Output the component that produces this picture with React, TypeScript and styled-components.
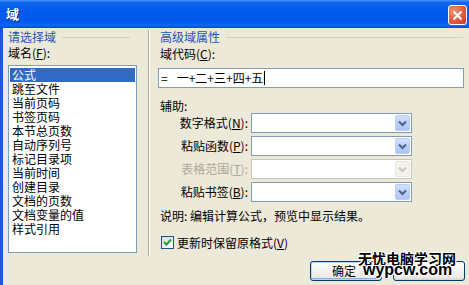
import React from "react";
import styled, { createGlobalStyle } from "styled-components";

const Global = createGlobalStyle`
  html, body { margin: 0; padding: 0; background: #ECE9D8; }
  body { font-family: "Noto Sans CJK SC", "Noto Sans", sans-serif; }
  * { box-sizing: border-box; }
`;

const Window = styled.div`
  position: relative;
  width: 469px;
  height: 285px;
  overflow: hidden;
  background: #ece9d8;
  display: flex;
  flex-direction: column;
  font-family: "Noto Sans CJK SC", "Noto Sans", sans-serif;
  font-size: 12px;
  color: #000;
`;

const TitleBar = styled.div`
  height: 28px;
  flex: none;
  display: flex;
  align-items: center;
  justify-content: space-between;
  padding: 0 2px 0 6px;
  background: linear-gradient(
    180deg,
    #4a97fa 0%,
    #0f68ec 9%,
    #0059ea 40%,
    #045cee 80%,
    #0f69f5 90%,
    #024bd4 100%
  );
`;

const TitleText = styled.span`
  color: #fff;
  font-weight: 700;
  font-size: 13px;
  line-height: 14px;
  text-shadow: 1px 1px #0c1a8a;
`;

const CloseButton = styled.div`
  width: 19px;
  height: 20px;
  margin-top: 2px;
  border: 1px solid #fff;
  border-radius: 3px;
  background: radial-gradient(circle at 30% 30%, #f39274 0%, #e35a3c 55%, #cc3f20 100%);
  display: flex;
  align-items: center;
  justify-content: center;
`;

const Frame = styled.div`
  flex: 1;
  display: flex;
  flex-direction: column;
  border-left: 3px solid #1458dc;
`;

const Main = styled.div`
  height: 228px;
  flex: none;
  display: flex;
`;

const LeftPanel = styled.div`
  width: 145px;
  flex: none;
  padding: 2px 0 0 5px;
  display: flex;
  flex-direction: column;
`;

const GroupHeader = styled.div<{ $w?: number; $ml?: number; $mr?: number }>`
  display: flex;
  align-items: center;
  height: 14px;
  line-height: 14px;
  color: #1f52b8;
  width: ${(p) => (p.$w ? `${p.$w}px` : "auto")};
  margin-left: ${(p) => p.$ml ?? 0}px;
  margin-right: ${(p) => p.$mr ?? 0}px;
  white-space: nowrap;
`;

const HeaderLine = styled.div`
  flex: 1;
  height: 0;
  border-top: 1px solid #d0d0bf;
  margin-left: 6px;
`;

const Label = styled.div<{ $mt?: number; $ml?: number; $disabled?: boolean }>`
  height: 14px;
  line-height: 14px;
  margin-top: ${(p) => p.$mt ?? 0}px;
  margin-left: ${(p) => p.$ml ?? 0}px;
  color: ${(p) => (p.$disabled ? "#aca899" : "#000")};
  white-space: nowrap;
`;

const ListBox = styled.div`
  margin-top: 5px;
  width: 129px;
  height: 188px;
  border: 1px solid #7f9db9;
  background: #fff;
  padding: 2px 1px;
  overflow: hidden;
`;

const ListItem = styled.div<{ $selected?: boolean }>`
  height: 14px;
  line-height: 14px;
  padding-left: 2px;
  white-space: nowrap;
  background: ${(p) => (p.$selected ? "#316ac5" : "transparent")};
  color: ${(p) => (p.$selected ? "#fff" : "#000")};
`;

const Separator = styled.div`
  width: 2px;
  flex: none;
  margin-top: 2px;
  border-left: 1px solid #aca899;
  border-right: 1px solid #fff;
`;

const RightPanel = styled.div`
  flex: 1;
  padding: 2px 5px 0 8px;
  display: flex;
  flex-direction: column;
`;

const TextInput = styled.div`
  margin-top: 7px;
  height: 20px;
  border: 1px solid #7f9db9;
  background: #fff;
  padding-left: 2px;
  display: flex;
  align-items: center;
  line-height: 14px;
  white-space: nowrap;
`;

const Formula = styled.span`
  margin-left: 9px;
`;

const Caret = styled.span`
  display: inline-block;
  width: 1px;
  height: 14px;
  background: #000;
  margin-left: 1px;
`;

const Rows = styled.div`
  display: flex;
  flex-direction: column;
  gap: 3px;
  padding-left: 19px;
`;

const Row = styled.div`
  display: flex;
  align-items: center;
  gap: 3px;
  height: 20px;
`;

const RowLabel = styled.div<{ $disabled?: boolean }>`
  width: 71px;
  text-align: right;
  line-height: 14px;
  white-space: nowrap;
  color: ${(p) => (p.$disabled ? "#aca899" : "#000")};
`;

const Combo = styled.div<{ $disabled?: boolean }>`
  width: 161px;
  height: 20px;
  border: 1px solid ${(p) => (p.$disabled ? "#c9c7ba" : "#7f9db9")};
  background: #fff;
  display: flex;
  justify-content: flex-end;
  padding: 1px;
`;

const ComboButton = styled.div<{ $disabled?: boolean }>`
  width: 15px;
  height: 16px;
  border-radius: 2px;
  border: 1px solid ${(p) => (p.$disabled ? "#e6e4dc" : "#b9cdf8")};
  background: ${(p) =>
    p.$disabled
      ? "#f4f3ee"
      : "linear-gradient(180deg, #d3e0fd 0%, #bccff9 50%, #aec4f5 100%)"};
  display: flex;
  align-items: center;
  justify-content: center;
`;

const CheckRow = styled.div`
  margin-top: 12px;
  margin-left: 3px;
  display: flex;
  align-items: center;
  gap: 3px;
  height: 14px;
`;

const CheckBox = styled.div`
  width: 13px;
  height: 13px;
  border: 1px solid #1c5180;
  background: linear-gradient(135deg, #dcdcd7 0%, #fff 100%);
  display: flex;
  align-items: center;
  justify-content: center;
`;

const Footer = styled.div`
  display: flex;
  justify-content: flex-end;
  gap: 11px;
  padding: 5px 4px 0 0;
`;

const Button = styled.div<{ $default?: boolean }>`
  width: 72px;
  height: 20px;
  border: 1px solid #003c74;
  border-radius: 3px;
  background: linear-gradient(180deg, #ffffff 0%, #f3f3ef 40%, #ecebe6 85%, #d6d0c5 100%);
  box-shadow: ${(p) =>
    p.$default ? "inset 0 0 0 1px #bcd4f6, inset -1px -1px 0 1px #89ade4" : "none"};
  display: flex;
  align-items: center;
  justify-content: flex-start;
  padding-left: 21px;
  line-height: 14px;
`;

const Watermark = styled.div`
  position: absolute;
  left: 358px;
  top: 251px;
  display: flex;
  flex-direction: column;
  color: #000;
  font-weight: 700;
  text-shadow: -1px 0 #fff, 1px 0 #fff, 0 -1px #fff, 0 1px #fff, 1px 1px #fff, -1px -1px #fff;
  pointer-events: none;
`;

const WatermarkCn = styled.div`
  font-family: "Noto Sans CJK SC", sans-serif;
  font-size: 14px;
  line-height: 14px;
  white-space: nowrap;
`;

const WatermarkEn = styled.div`
  font-family: "Liberation Sans", Arial, sans-serif;
  font-size: 16px;
  line-height: 12px;
  margin-top: -1px;
  margin-left: 5px;
  white-space: nowrap;
`;

const Chevron = ({ color }: { color: string }) => (
  <svg width="9" height="7" viewBox="0 0 9 7">
    <path d="M1 1.5 L4.5 5 L8 1.5" fill="none" stroke={color} strokeWidth="2" />
  </svg>
);

const items = [
  "公式",
  "跳至文件",
  "当前页码",
  "书签页码",
  "本节总页数",
  "自动序列号",
  "标记目录项",
  "当前时间",
  "创建目录",
  "文档的页数",
  "文档变量的值",
  "样式引用",
];

const combos = [
  { label: "数字格式", key: "N", disabled: false },
  { label: "粘贴函数", key: "P", disabled: false },
  { label: "表格范围", key: "T", disabled: true },
  { label: "粘贴书签", key: "B", disabled: false },
];

export default function App() {
  return (
    <>
      <Global />
      <Window>
        <TitleBar>
          <TitleText>域</TitleText>
          <CloseButton>
            <svg width="11" height="11" viewBox="0 0 11 11">
              <path d="M1.5 1.5 L9.5 9.5 M9.5 1.5 L1.5 9.5" stroke="#fff" strokeWidth="2" />
            </svg>
          </CloseButton>
        </TitleBar>
        <Frame>
          <Main>
            <LeftPanel>
              <GroupHeader $w={122}>
                请选择域
                <HeaderLine />
              </GroupHeader>
              <Label $mt={2}>
                域名(<u>F</u>):
              </Label>
              <ListBox>
                {items.map((it, i) => (
                  <ListItem key={it} $selected={i === 0}>
                    {it}
                  </ListItem>
                ))}
              </ListBox>
            </LeftPanel>
            <Separator />
            <RightPanel>
              <GroupHeader $ml={2} $mr={1}>
                高级域属性
                <HeaderLine />
              </GroupHeader>
              <Label $mt={3} $ml={2}>
                域代码(<u>C</u>):
              </Label>
              <TextInput>
                =<Formula>一+二+三+四+五</Formula>
                <Caret />
              </TextInput>
              <Label $mt={11} $ml={2}>
                辅助:
              </Label>
              <Rows>
                {combos.map((c) => (
                  <Row key={c.key}>
                    <RowLabel $disabled={c.disabled}>
                      {c.label}(<u>{c.key}</u>):
                    </RowLabel>
                    <Combo $disabled={c.disabled}>
                      <ComboButton $disabled={c.disabled}>
                        <Chevron color={c.disabled ? "#c9c7ba" : "#4d6185"} />
                      </ComboButton>
                    </Combo>
                  </Row>
                ))}
              </Rows>
              <Label $mt={7} $ml={2}>
                说明: 编辑计算公式，预览中显示结果。
              </Label>
              <CheckRow>
                <CheckBox>
                  <svg width="9" height="9" viewBox="0 0 9 9">
                    <path d="M1 4 L3.5 6.5 L8 1.5" fill="none" stroke="#21a121" strokeWidth="2" />
                  </svg>
                </CheckBox>
                <span>
                  更新时保留原格式(<u>V</u>)
                </span>
              </CheckRow>
            </RightPanel>
          </Main>
          <Footer>
            <Button $default>确定</Button>
            <Button />
          </Footer>
        </Frame>
        <Watermark>
          <WatermarkCn>无忧电脑学习网</WatermarkCn>
          <WatermarkEn>wypcw.com</WatermarkEn>
        </Watermark>
      </Window>
    </>
  );
}
